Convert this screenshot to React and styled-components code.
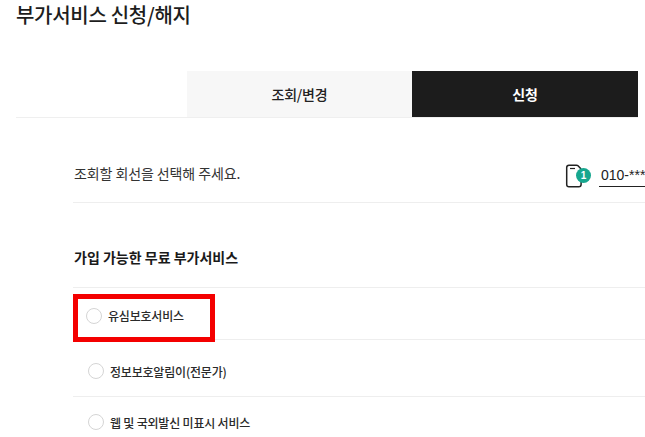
import styled, { createGlobalStyle } from "styled-components";

const GlobalStyle = createGlobalStyle`
  html, body {
    margin: 0;
    height: 437px;
    overflow: hidden;
    background: #fff;
  }
  body {
    font-family: "Noto Sans CJK KR", "Noto Sans", sans-serif;
    color: #1d1d1d;
  }
`;

const Page = styled.div`
  width: 645px;
  height: 437px;
  overflow: hidden;
`;

const Title = styled.h1`
  margin: 0;
  padding: 0 0 0 16px;
  height: 71px;
  font-size: 20px;
  font-weight: 500;
  line-height: 29px;
  letter-spacing: -0.3px;
`;

const TabBar = styled.div`
  display: flex;
  justify-content: flex-end;
  width: 622px;
  height: 47px;
  margin-left: 16px;
  border-bottom: 1px solid #efefef;
  box-sizing: border-box;
`;

const Tab = styled.div`
  display: flex;
  align-items: center;
  justify-content: center;
  width: ${p => (p.$active ? 226 : 225)}px;
  height: 46px;
  font-size: 14px;
  font-weight: ${p => (p.$active ? 700 : 500)};
  letter-spacing: -0.2px;
  background: ${p => (p.$active ? "#1c1c1c" : "#f7f7f7")};
  color: ${p => (p.$active ? "#fff" : "#222")};
`;

const Content = styled.div`
  margin-left: 73px;
`;

const LineRow = styled.div`
  display: flex;
  align-items: center;
  justify-content: space-between;
  height: 85px;
  box-sizing: border-box;
  padding: 26px 0 0 1px;
  border-bottom: 1px solid #eee;
  font-size: 14px;
  letter-spacing: -0.1px;
  color: #333;
`;

const LinePicker = styled.div`
  display: flex;
  align-items: center;
  flex: none;
  width: 80px;
  gap: 12px;
  margin-top: 5px;
`;

const PhoneIcon = styled.div`
  position: relative;
  flex: none;
  width: 22px;
  height: 24px;
`;

const Badge = styled.span`
  position: absolute;
  right: -4px;
  top: 4px;
  width: 15px;
  height: 15px;
  border-radius: 50%;
  background: #17a78f;
  color: #fff;
  font-family: "Liberation Sans", sans-serif;
  font-size: 10px;
  font-weight: 700;
  line-height: 15px;
  text-align: center;
`;

const LineNumber = styled.span`
  flex: none;
  font-family: "Liberation Sans", sans-serif;
  font-size: 14px;
  line-height: 22px;
  letter-spacing: 0;
  color: #222;
  white-space: nowrap;
  border-bottom: 1.5px solid #222;
  padding-left: 2px;
`;

const SectionTitle = styled.h2`
  margin: 0;
  height: 85px;
  box-sizing: border-box;
  padding: 42px 0 0 1px;
  font-size: 14px;
  font-weight: 700;
  line-height: 24px;
  letter-spacing: 0;
  color: #1a1a1a;
  border-bottom: 1px solid #eee;
`;

const ServiceRow = styled.div`
  position: relative;
  display: flex;
  align-items: center;
  gap: 6px;
  height: ${p => p.$height}px;
  box-sizing: border-box;
  padding-left: ${p => p.$indent}px;
  padding-top: ${p => p.$top}px;
  padding-bottom: ${p => p.$bottom}px;
  border-bottom: 1px solid #eee;
  font-size: 12px;
  font-weight: 500;
  letter-spacing: -0.2px;
  color: #2a2a2a;
`;

const Radio = styled.span`
  flex: none;
  width: 14px;
  height: 14px;
  border: 1px solid #d5d5d5;
  border-radius: 50%;
  background: #fff;
`;

const Highlight = styled.div`
  position: absolute;
  left: 0;
  top: 6px;
  width: 142px;
  height: 48px;
  box-sizing: border-box;
  border: 5px solid #f40000;
`;

const services = [
  { name: "유심보호서비스", height: 52, indent: 13, top: 4, bottom: 0, marked: true },
  { name: "정보보호알림이(전문가)", height: 57, indent: 15, top: 6, bottom: 0 },
  { name: "웹 및 국외발신 미표시 서비스", height: 57, indent: 15, top: 0, bottom: 6 },
];

function App() {
  return (
    <Page>
      <GlobalStyle />
      <Title>부가서비스 신청/해지</Title>

      <TabBar>
        <Tab>조회/변경</Tab>
        <Tab $active>신청</Tab>
      </TabBar>

      <Content>
        <LineRow>
          <span>조회할 회선을 선택해 주세요.</span>
          <LinePicker>
            <PhoneIcon>
              <svg width="18" height="24" viewBox="0 0 18 24" fill="none">
                <path
                  d="M4 1.2h7.500c.6 0 1.100.2 1.500.6l2.600 2.800c.3.4.5.8.5 1.300V20.500c0 1.300-1 2.300-2.300 2.300H4c-1.300 0-2.300-1-2.300-2.300V3.500C1.700 2.200 2.700 1.200 4 1.200Z"
                  stroke="#222"
                  strokeWidth="1.500"
                />
                <path d="M5 4.500h5" stroke="#222" strokeWidth="1.200" />
              </svg>
              <Badge>1</Badge>
            </PhoneIcon>
            <LineNumber>010-****-****</LineNumber>
          </LinePicker>
        </LineRow>

        <SectionTitle>가입 가능한 무료 부가서비스</SectionTitle>

        {services.map(service => (
          <ServiceRow
            key={service.name}
            $height={service.height}
            $indent={service.indent}
            $top={service.top}
            $bottom={service.bottom}
          >
            {service.marked && <Highlight />}
            <Radio />
            <span>{service.name}</span>
          </ServiceRow>
        ))}
      </Content>
    </Page>
  );
}

export default App;
